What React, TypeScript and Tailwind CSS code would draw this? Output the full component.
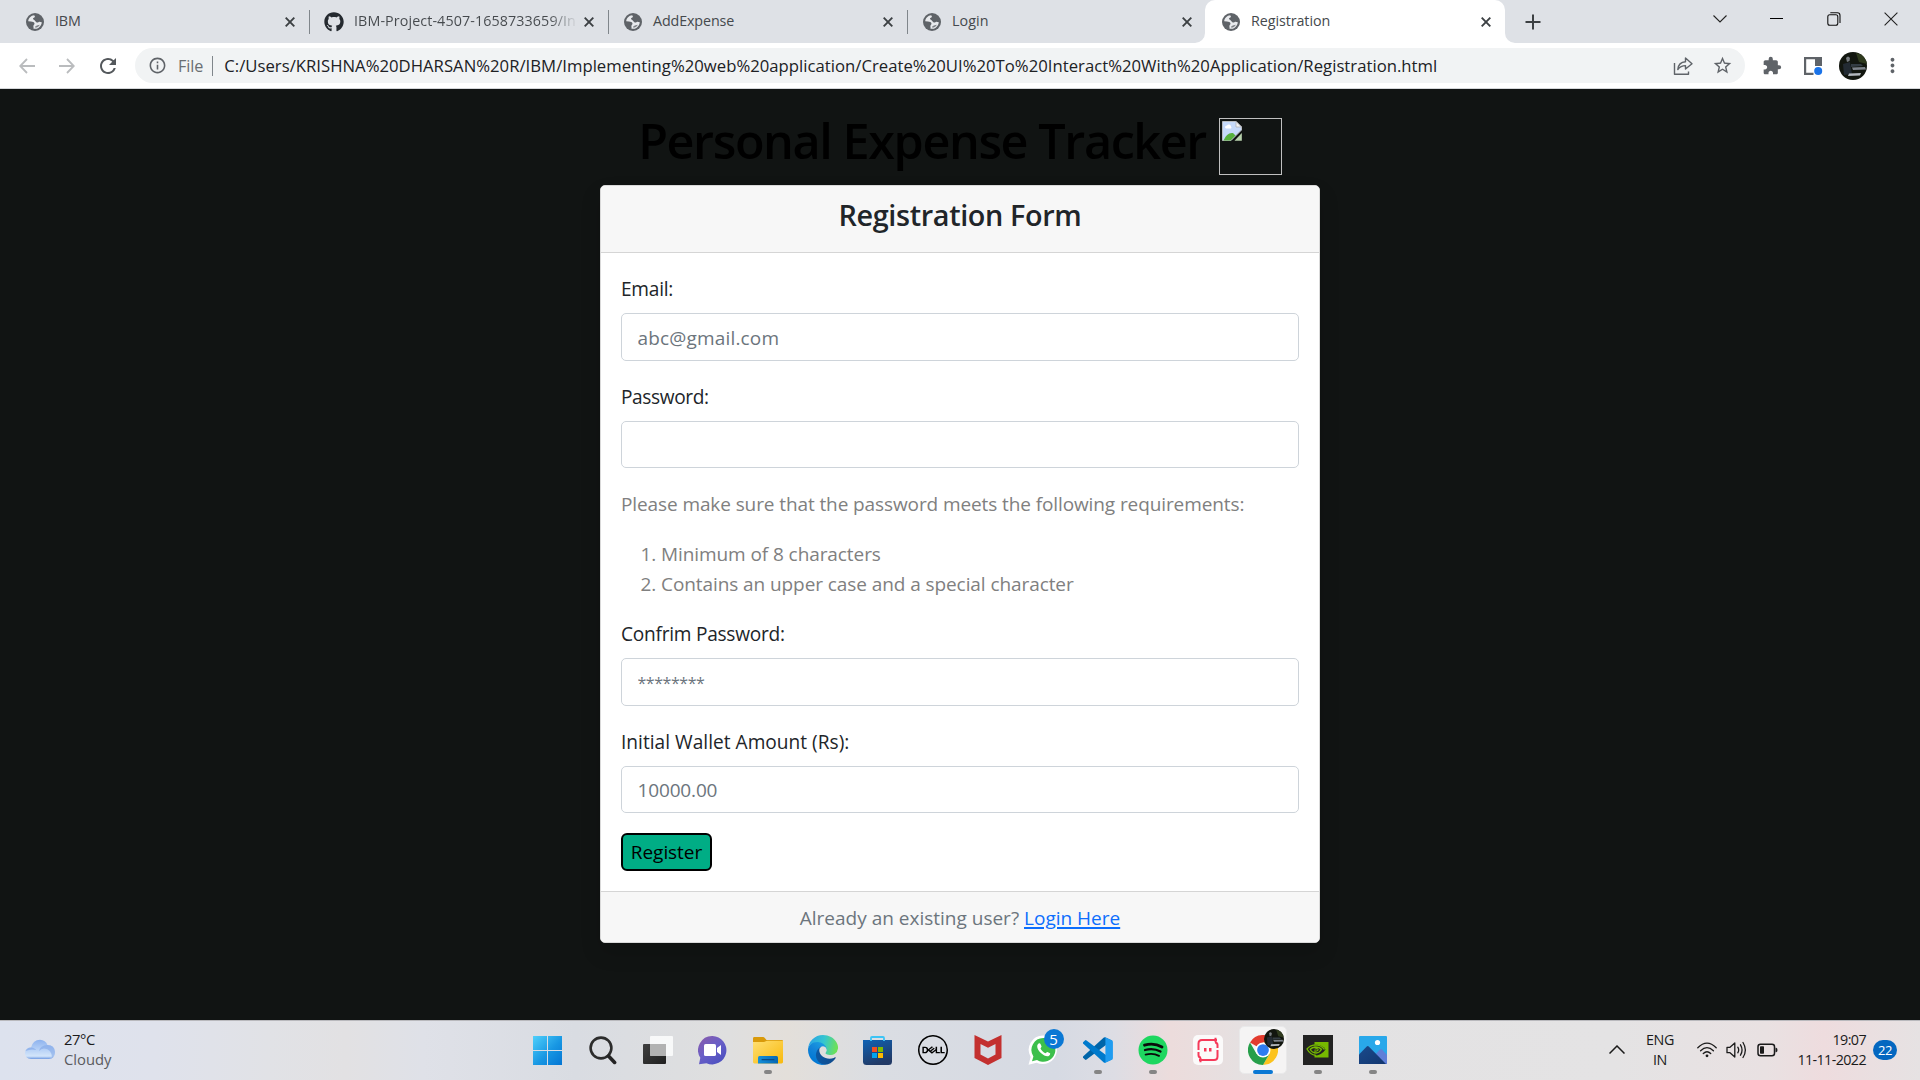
import type { ReactNode } from "react";
import { MdExtension, MdMoreVert, MdOutlineInfo, MdRefresh, MdStarBorder } from "react-icons/md";
import { FaGithub } from "react-icons/fa";
import { SiDell } from "react-icons/si";

/* ---------- Browser chrome ---------- */

function CloseGlyph({ className = "" }: { className?: string }) {
  return (
    <svg viewBox="0 0 10 10" className={`size-[10px] shrink-0 ${className}`} stroke="#3c4043" strokeWidth="1.9" fill="none">
      <path d="M0.7 0.7 9.3 9.3M9.3 0.7 0.7 9.3" />
    </svg>
  );
}

function GlobeIcon() {
  return (
    <svg viewBox="0 0 18 18" className="size-[18px]">
      <circle cx="9" cy="9" r="9" fill="#5f6368" />
      <path
        d="M8.200 2.200C5 2.500 2.500 4.900 2.200 8.200L5 8.400C6.500 8.500 8.300 9 8.500 10.400 8.600 11.500 7.500 11.800 7.400 13 7.300 14 7.800 14.600 7.500 15.700 9 16.100 11.200 15.800 12.700 14.700 14.500 13.400 15.700 11.500 15.800 9.300L13.300 8.700C12.500 8.500 12.400 9.600 11.500 9.600 10.300 9.600 9.500 8.300 8.800 7.500 8.200 6.800 6.900 6.700 7 5.600 7.100 4.700 8.800 4.700 9 3.700Z"
        fill="#e8eaed"
      />
      <path d="M10 7.200C11.200 7.500 12 6.700 12.800 7.300 12.300 8.500 11.300 8.600 10 7.200Z" fill="#5f6368" />
      <path d="M9.300 13.200C10.800 12.300 12.200 11.800 13.800 11.700 13 13.400 11 14.700 9.300 14.700Z" fill="#5f6368" fillOpacity="0.750" />
    </svg>
  );
}

function Tab({ icon, children, divider = true }: { icon: ReactNode; children: ReactNode; divider?: boolean }) {
  return (
    <div className="relative flex h-[43px] w-[299px] shrink-0 items-center pl-[15px] pr-[14px]">
      <div className="flex w-[20px] shrink-0 justify-center">{icon}</div>
      <div className="mb-[2px] ml-[10px] min-w-0 flex-1 whitespace-nowrap text-[14.3px] leading-[20px] text-[#45494d]">
        {children}
      </div>
      <CloseGlyph className="ml-[10px]" />
      {divider && <div className="absolute right-[-1px] top-[10px] h-[24px] w-px bg-[#80868b]" />}
    </div>
  );
}

function TabStrip() {
  return (
    <div className="flex h-[43px] bg-[#dee1e6] pl-[10px]">
      <Tab icon={<GlobeIcon />}>
        <span className="tracking-[-0.17px]">IBM</span>
      </Tab>
      <Tab icon={<FaGithub className="size-[20px] text-[#24292f]" />}>
        <span className="bg-[linear-gradient(to_right,#45494d_88%,#dee1e6_101%)] bg-clip-text tracking-[0.1px] text-transparent">
          IBM-Project-4507-1658733659/In
        </span>
      </Tab>
      <Tab icon={<GlobeIcon />}>
        <span className="tracking-[-0.12px]">AddExpense</span>
      </Tab>
      <Tab icon={<GlobeIcon />} divider={false}>
        <span className="tracking-[0.06px]">Login</span>
      </Tab>
      <div className="relative -ml-px w-[300px] shrink-0 rounded-t-[10px] bg-white pl-px">
        <Tab icon={<GlobeIcon />} divider={false}>
          <span className="tracking-[-0.07px]">Registration</span>
        </Tab>
        <svg className="absolute bottom-0 left-[-10px] size-[10px]" viewBox="0 0 10 10">
          <path d="M10 0V10H0A10 10 0 0 0 10 0Z" fill="#fff" />
        </svg>
        <svg className="absolute bottom-0 right-[-10px] size-[10px]" viewBox="0 0 10 10">
          <path d="M0 0V10H10A10 10 0 0 1 0 0Z" fill="#fff" />
        </svg>
      </div>
      <div className="flex w-[55px] items-center justify-center">
        <svg viewBox="0 0 16 16" className="size-[16px]" stroke="#3c4043" strokeWidth="2">
          <path d="M8 0.5V15.5M0.5 8H15.5" />
        </svg>
      </div>
      <div className="ml-auto flex h-[37px] items-center">
        <div className="flex w-[57px] justify-center">
          <svg viewBox="0 0 14 8" className="h-[8px] w-[14px]" fill="none" stroke="#222" strokeWidth="1.1">
            <path d="M0.5 0.5 7 7 13.5 0.5" />
          </svg>
        </div>
        <div className="flex w-[57px] justify-center">
          <div className="h-px w-[13px] bg-black" />
        </div>
        <div className="flex w-[57px] justify-center">
          <svg viewBox="0 0 14 14" className="size-[14px]" fill="none" stroke="#111" strokeWidth="1.1">
            <rect x="0.8" y="2.8" width="10" height="10.4" rx="2" />
            <path d="M3.3 0.8H10.4Q13 0.8 13 3.4V11" />
          </svg>
        </div>
        <div className="flex w-[58px] justify-center">
          <svg viewBox="0 0 14 14" className="size-[14px]" fill="none" stroke="#222" strokeWidth="1.1">
            <path d="M0.6 0.6 13.4 13.4M13.4 0.6 0.6 13.4" />
          </svg>
        </div>
      </div>
    </div>
  );
}

function Avatar({ className = "" }: { className?: string }) {
  return (
    <svg viewBox="0 0 28 28" className={className}>
      <defs>
        <clipPath id="avatarClip">
          <circle cx="14" cy="14" r="14" />
        </clipPath>
      </defs>
      <g clipPath="url(#avatarClip)">
        <rect width="28" height="28" fill="#12160f" />
        <path d="M17 1 28 4V12L20 10Z" fill="#2f3a1e" />
        <path d="M7 6Q9 3 11 6L10.500 9 8 10Z" fill="#777c80" />
        <path d="M4 12 11 10 13 22 5 23Z" fill="#232b33" />
        <path d="M13 15.500 26 15 27 17.500 14 18Z" fill="#7d838b" />
        <path d="M10 21.500 22 21 21 23.500 9 24Z" fill="#b3b8be" />
        <path d="M12 12 22 12 24 14 12 15Z" fill="#343d44" />
      </g>
    </svg>
  );
}

function ArrowGlyph({ flip = false }: { flip?: boolean }) {
  return (
    <svg viewBox="0 0 16 16" className={flip ? "size-[16px] rotate-180" : "size-[16px]"} fill="none" stroke="#babcbe" strokeWidth="1.8">
      <path d="M16 8H1.5M8 1 1.2 8 8 15" />
    </svg>
  );
}

function Toolbar() {
  return (
    <div className="flex h-[46px] items-center border-b border-[#d5d7da] bg-white">
      <div className="ml-[19px] flex w-[16px]">
        <ArrowGlyph />
      </div>
      <div className="ml-[24px] flex w-[16px]">
        <ArrowGlyph flip />
      </div>
      <MdRefresh className="ml-[21px] size-[24px] text-[#54585c]" />
      <div className="ml-[15px] flex h-[35px] w-[1610px] items-center rounded-full bg-[#f1f3f4] pl-[13px]">
        <MdOutlineInfo className="size-[19px] text-[#5f6368]" />
        <span className="ml-[11px] text-[16.2px] leading-[24px] tracking-[-0.1px] text-[#6a6e72]">File</span>
        <div className="ml-[9px] h-[20px] w-px bg-[#80868b]" />
        <span className="ml-[11px] whitespace-nowrap text-[16.7px] leading-[24px] tracking-[0.018px] text-[#202124]">
          C:/Users/KRISHNA%20DHARSAN%20R/IBM/Implementing%20web%20application/Create%20UI%20To%20Interact%20With%20Application/Registration.html
        </span>
        <div className="ml-auto flex items-center pr-[12px]">
          <svg viewBox="0 0 20 20" className="size-[20px]" fill="none" stroke="#5f6368" strokeWidth="1.4" strokeLinejoin="round">
            <path d="M1.5 7V18.3H15.5V15.5" />
            <path d="M4.8 13.5C5.3 8.5 8.3 6 12.5 5.8V2L19 7.7 12.5 13V9.6C9 9.6 6.8 10.7 4.8 13.5Z" />
          </svg>
          <MdStarBorder className="ml-[19px] size-[21px] text-[#5f6368]" />
        </div>
      </div>
      <MdExtension className="ml-[17px] size-[20px] text-[#5f6368]" />
      <svg viewBox="0 0 20 20" className="ml-[21px] size-[20px]">
        <path d="M1 1H19V10H12V3.2H3.2V16.8H10.5V19H1Z" fill="#5f6368" />
        <circle cx="15.2" cy="15" r="4" fill="#1a73e8" />
      </svg>
      <Avatar className="ml-[16px] size-[28px]" />
      <MdMoreVert className="ml-[14px] size-[23px] text-[#5f6368]" />
    </div>
  );
}

/* ---------- Registration page ---------- */

function BrokenImage() {
  return (
    <div className="ml-[13px] mt-[2px] h-[57px] w-[63px] border border-[#c0c0c0] pl-[2px] pt-[2px]">
      <svg viewBox="0 0 20 20" className="size-[20px]">
        <path d="M0.5 0.5H14L19.5 6V9L9 19.5H0.5Z" fill="#c6dafa" stroke="#b9bcc0" />
        <path d="M14 0.5 19.5 6H14Z" fill="#f4f4f4" stroke="#b0b3b8" strokeWidth="0.8" />
        <path d="M3 6.5A2 2 0 0 1 5 4.5 2.2 2.2 0 0 1 9 5.5 1.4 1.4 0 0 1 9 7.5H4Z" fill="#fff" />
        <path d="M1.5 19.5Q5 11 11 12L13.5 14.5 8.5 19.5Z" fill="#57b13e" />
        <path d="M19.8 12V19.8H12.5Z" fill="#b9d3ae" />
      </svg>
    </div>
  );
}

function Field({ label, placeholder, labelTracking, inputClass = "text-[19px]" }: { label: string; placeholder: string; labelTracking: string; inputClass?: string }) {
  return (
    <div className="mb-[20px]">
      <label className={`mb-[9px] block pt-[2px] text-[19.1px] leading-[29px] text-[#212529] ${labelTracking}`}>{label}</label>
      <input
        placeholder={placeholder}
        className={`block h-[47.5px] w-full rounded-[5px] border border-[#ced4da] bg-white px-[15.5px] pb-0 pt-[2px] placeholder:text-[#6c757d] ${inputClass}`}
      />
    </div>
  );
}

function RegistrationPage() {
  return (
    <main className="flex h-[931px] flex-col items-center bg-[#111413] pt-[27px]">
      <div className="flex h-[69px] items-start">
        <h1 className="-mt-[2px] text-[48.5px] font-semibold leading-[52px] tracking-[-1.39px] text-black">Personal Expense Tracker</h1>
        <BrokenImage />
      </div>
      <section className="w-[720px] overflow-hidden rounded-[5px] border border-[#d9d9d9] bg-white shadow-[0_10px_20px_rgba(0,0,0,0.15)]">
        <header className="h-[67px] border-b border-[#d5d5d5] bg-[#f7f7f7] pt-[11px] text-center">
          <h2 className="text-[28.8px] font-semibold leading-[36px] tracking-[-0.36px] text-[#212529]">Registration Form</h2>
        </header>
        <form className="px-[20px] pb-[20px] pt-[20px]">
          <Field label="Email:" placeholder="abc@gmail.com" labelTracking="tracking-[-0.25px]" inputClass="text-[19px] tracking-[0.17px]" />
          <Field label="Password:" placeholder="" labelTracking="tracking-[-0.38px]" />
          <div className="pt-px text-[19px] leading-[30px] text-[#808080]">
            <p className="mb-[20px] tracking-[-0.1px]">Please make sure that the password meets the following requirements:</p>
            <ol className="mb-[19px] list-decimal pl-[40px] tracking-[-0.08px]">
              <li>Minimum of 8 characters</li>
              <li>Contains an upper case and a special character</li>
            </ol>
          </div>
          <Field label="Confrim Password:" placeholder="********" labelTracking="tracking-[-0.25px]" inputClass="text-[16px] tracking-[-0.45px]" />
          <Field label="Initial Wallet Amount (Rs):" placeholder="10000.00" labelTracking="tracking-[0.02px]" inputClass="text-[19px] tracking-[-0.15px]" />
          <button
            type="button"
            className="block h-[38px] w-[91px] rounded-[6px] border-2 border-black bg-[#00ad85] pt-px text-center text-[19px] leading-[33px] tracking-[-0.06px] text-black"
          >
            Register
          </button>
        </form>
        <footer className="h-[51px] border-t border-[#d5d5d5] bg-[#f7f7f7] pt-[11px] text-center text-[19px] leading-[30px] text-[#6c757d]">
          Already an existing user? <a className="text-[#0d6efd] underline decoration-2 underline-offset-2">Login Here</a>
        </footer>
      </section>
    </main>
  );
}

/* ---------- Taskbar ---------- */

function WindowsIcon() {
  return (
    <svg viewBox="0 0 29 29" className="size-[29px]">
      <defs>
        <linearGradient id="win" x1="0" y1="0" x2="1" y2="1">
          <stop offset="0" stopColor="#4fd0fb" />
          <stop offset="0.55" stopColor="#1897e3" />
          <stop offset="1" stopColor="#0475d3" />
        </linearGradient>
      </defs>
      <path d="M0 0H14V14H0ZM15 0H29V14H15ZM0 15H14V29H0ZM15 15H29V29H15Z" fill="url(#win)" />
    </svg>
  );
}

function SearchIcon() {
  return (
    <svg viewBox="0 0 28 29" className="h-[29px] w-[28px]" fill="none">
      <circle cx="12" cy="12" r="10.4" stroke="#2c2c2c" strokeWidth="2.6" />
      <path d="M19.5 20 25.6 26.4" stroke="#242424" strokeWidth="3.6" strokeLinecap="round" />
    </svg>
  );
}

function TaskViewIcon() {
  return (
    <svg viewBox="0 0 30 29" className="h-[29px] w-[30px]">
      <defs>
        <linearGradient id="tv" x1="0" y1="0" x2="1" y2="1">
          <stop offset="0" stopColor="#3f3f3f" />
          <stop offset="1" stopColor="#202020" />
        </linearGradient>
      </defs>
      <rect y="8" width="23" height="20" rx="1" fill="url(#tv)" />
      <rect x="7" y="0" width="23" height="20" rx="1" fill="#fff" fillOpacity="0.8" />
      <path d="M7 8H23V20H8Q7 20 7 19Z" fill="#a9a9a9" fillOpacity="0.8" />
    </svg>
  );
}

function ChatIcon() {
  return (
    <svg viewBox="0 0 29 29" className="size-[29px]">
      <defs>
        <linearGradient id="chat" x1="0" y1="0" x2="0.8" y2="1">
          <stop offset="0" stopColor="#8b5aa8" />
          <stop offset="0.5" stopColor="#6a5fc7" />
          <stop offset="1" stopColor="#4a4fc0" />
        </linearGradient>
      </defs>
      <path d="M14.5 0A14.2 14.2 0 1 1 8.5 27.2L1 28.3 2.3 21.8A14.2 14.2 0 0 1 14.5 0Z" fill="url(#chat)" />
      <rect x="6" y="8" width="12" height="12" rx="1.6" fill="#fff" />
      <path d="M19 12 23 9V19L19 16Z" fill="#fff" />
    </svg>
  );
}

function FolderIcon() {
  return (
    <svg viewBox="0 0 30 29" className="h-[29px] w-[30px]">
      <defs>
        <linearGradient id="folder" x1="0" y1="0" x2="1" y2="1">
          <stop offset="0" stopColor="#ffdf72" />
          <stop offset="1" stopColor="#f8b90c" />
        </linearGradient>
        <linearGradient id="folderBase" x1="0" y1="0" x2="1" y2="0">
          <stop offset="0" stopColor="#1590d9" />
          <stop offset="1" stopColor="#0667b4" />
        </linearGradient>
      </defs>
      <path d="M0 2.4Q0 1 1.4 1H10Q11 1 12 2.2L13.5 4H29Q30 4 30 5V10H0Z" fill="#d99a0a" />
      <path d="M0 6H11L14 4.8H30V26Q30 27.4 28.6 27.4H1.4Q0 27.4 0 26Z" fill="url(#folder)" />
      <path d="M5 27.4V21.5Q5 20 6.5 20H23.5Q25 20 25 21.5V27.4Z" fill="url(#folderBase)" />
      <rect x="8.5" y="23" width="13" height="1.3" rx="0.6" fill="#0a4a85" />
    </svg>
  );
}

function EdgeIcon() {
  return (
    <svg viewBox="0 0 256 256" className="size-[30px]">
      <defs>
        <linearGradient id="edgeA" x1="63" y1="178" x2="241" y2="178" gradientUnits="userSpaceOnUse">
          <stop offset="0" stopColor="#0c59a4" />
          <stop offset="1" stopColor="#114a8b" />
        </linearGradient>
        <linearGradient id="edgeB" x1="140" y1="80" x2="40" y2="220" gradientUnits="userSpaceOnUse">
          <stop offset="0" stopColor="#1b9de2" />
          <stop offset="0.5" stopColor="#1383d8" />
          <stop offset="1" stopColor="#0078d4" />
        </linearGradient>
        <linearGradient id="edgeC" x1="20" y1="60" x2="240" y2="110" gradientUnits="userSpaceOnUse">
          <stop offset="0" stopColor="#2ba7e3" />
          <stop offset="0.5" stopColor="#36c6d0" />
          <stop offset="1" stopColor="#6be05a" />
        </linearGradient>
      </defs>
      <path d="M231 190.5a94 94 0 0 1-10.500 4.700 101.900 101.900 0 0 1-35.900 6.400c-47.300 0-88.500-32.500-88.500-74.300a31.500 31.500 0 0 1 16.400-27.300c-42.800 1.800-53.800 46.400-53.800 72.500 0 73.900 68.100 81.400 82.800 81.400 7.900 0 19.800-2.300 27-4.600l1.300-.4a128.300 128.300 0 0 0 66.600-52.800 4 4 0 0 0-5.400-5.600Z" fill="url(#edgeA)" />
      <path d="M105.700 241.400A79.200 79.200 0 0 1 83 220.100a80.700 80.700 0 0 1 29.500-120c3.200-1.500 8.500-4.200 15.600-4.100a32.400 32.400 0 0 1 25.700 13 31.900 31.900 0 0 1 6.300 18.700c0-.2 24.500-79.600-80-79.600-43.900 0-80 41.700-80 78.200a130.200 130.200 0 0 0 12.100 56 128 128 0 0 0 156.400 67 75.500 75.500 0 0 1-62.800-7.900Z" fill="url(#edgeB)" />
      <path d="M152.300 148.900c-.8 1-3.300 2.500-3.300 5.700 0 2.600 1.700 5.200 4.800 7.300 14.400 10.100 41.700 8.700 41.800 8.700a59.600 59.600 0 0 0 30.300-8.300 61.400 61.400 0 0 0 30.400-52.900c.3-22.400-8-37.300-11.300-43.900C223.700 23.900 177.700 0 127.600 0A128 128 0 0 0 0 126.200c.5-36.500 36.800-66 80-66 3.500 0 23.500.3 42 10 16.300 8.600 24.900 18.900 30.800 29.200 6.200 10.700 7.300 24.100 7.300 29.500 0 5.300-2.700 13.300-7.800 20Z" fill="url(#edgeC)" />
    </svg>
  );
}

function StoreIcon() {
  return (
    <svg viewBox="0 0 29 30" className="h-[30px] w-[29px]">
      <defs>
        <linearGradient id="store" x1="0" y1="0" x2="0.4" y2="1">
          <stop offset="0" stopColor="#0f62b5" />
          <stop offset="1" stopColor="#213a66" />
        </linearGradient>
      </defs>
      <path d="M0 5H29V26.500Q29 30 25.500 30H3.500Q0 30 0 26.500Z" fill="url(#store)" />
      <path d="M8 6V3Q8 2 9 2H20Q21 2 21 3V6" fill="none" stroke="#3cc4f5" strokeWidth="1.8" />
      <path d="M9 12H14V17H9Z" fill="#f25022" />
      <path d="M15 12H20V17H15Z" fill="#7fba00" />
      <path d="M9 18H14V23H9Z" fill="#00a4ef" />
      <path d="M15 18H20V23H15Z" fill="#ffb900" />
    </svg>
  );
}

function McAfeeIcon() {
  return (
    <svg viewBox="0 0 28 30" className="h-[30px] w-[28px]">
      <path
        d="M0.500 0 14 6.500 27.500 0V23L14 30 0.500 23ZM6.500 9V19.500L14 23.500 21.500 19.500V9L14 12.700Z"
        fill="#c3302f"
        fillRule="evenodd"
      />
    </svg>
  );
}

function WhatsAppIcon() {
  return (
    <div className="relative size-[30px]">
      <svg viewBox="0 0 30 30" className="size-[30px]">
        <path d="M15.500 0.500A14.300 14.300 0 1 1 8.500 27.700L0.500 29.800 2.700 22A14.300 14.300 0 0 1 15.500 0.500Z" fill="#fff" />
        <path d="M15.500 3A11.900 11.900 0 1 1 9 24.900L4 26.300 5.400 21.400A11.900 11.900 0 0 1 15.500 3Z" fill="#3cbf4b" />
        <path
          d="M10.600 8.600C11.300 8 12.100 8.200 12.500 9L13.500 11.300C13.700 12 12.600 13 12.500 13.500 13.500 15.700 15.300 17.300 17.500 18.200 18 18.200 18.900 16.800 19.500 17L22 18.300C22.600 18.800 21.800 20.800 20.300 21.200 17 22.200 9 16.500 9.200 11.300 9.300 10 10 9 10.600 8.600Z"
          fill="#fff"
        />
      </svg>
      <div className="absolute left-[16px] top-[-6px] flex size-[20px] items-center justify-center rounded-full bg-[#0a78d4] text-[15px] leading-[20px] text-white">
        5
      </div>
    </div>
  );
}

function VSCodeIcon() {
  return (
    <svg viewBox="0 0 256 256" className="size-[30px]">
      <path d="m246.100 45.900-52.700-25.400a15.900 15.900 0 0 0-18.200 3.100L2.700 180.900a10.700 10.700 0 0 0 0 15.700l14.100 12.900a10.700 10.700 0 0 0 13.600.6L238.100 52.400a10.600 10.600 0 0 1 17 8.500v-.6a16 16 0 0 0-9-14.400Z" fill="#0065a9" />
      <path d="m246.100 210.100-52.700 25.400a16 16 0 0 1-18.200-3.100L2.700 75.100a10.700 10.700 0 0 1 0-15.700l14.100-12.900a10.700 10.700 0 0 1 13.600-.6l207.700 157.700a10.600 10.600 0 0 0 17-8.500v.6a16 16 0 0 1-9 14.400Z" fill="#007acc" />
      <path d="M193.400 235.500a16 16 0 0 1-18.200-3.100 9.400 9.400 0 0 0 16-6.600V30.200a9.400 9.400 0 0 0-16-6.600 16 16 0 0 1 18.200-3.100l52.700 25.300a16 16 0 0 1 9.100 14.400v135.600a16 16 0 0 1-9.100 14.400Z" fill="#1f9cf0" />
    </svg>
  );
}

function SpotifyIcon() {
  return (
    <svg viewBox="0 0 30 30" className="size-[30px]" fill="none" stroke="#0a0a0a" strokeLinecap="round">
      <circle cx="15" cy="15" r="14.500" fill="#1ed760" stroke="none" />
      <path d="M6.500 10.200Q16 7.500 24 12" strokeWidth="2.800" />
      <path d="M7 15Q15.500 12.700 22.500 16.500" strokeWidth="2.300" />
      <path d="M7.600 19.600Q15 17.600 21 20.800" strokeWidth="1.900" />
    </svg>
  );
}

function FrameIcon() {
  return (
    <svg viewBox="0 0 30 30" className="size-[30px]">
      <rect width="30" height="30" rx="5" fill="#fbfafa" />
      <g fill="none" stroke="#f63a5a" strokeWidth="2">
        <path d="M5.500 15V8.500Q5.500 5 9 5H24M22.500 2.800V7.200" />
        <path d="M24.500 15V21.500Q24.500 25 21 25H6M7.500 22.800V27.200" />
        <path d="M24.500 13V10Q24.500 7.500 22 7.500M5.500 17V20Q5.500 22.500 8 22.500" />
      </g>
      <path d="M11 13H13.500V16.500H11ZM16 13H18.500V16.500H16Z" fill="#f63a5a" />
    </svg>
  );
}

function ChromeIcon() {
  return (
    <div className="relative size-[30px]">
      <svg viewBox="0 0 48 48" className="size-[30px]">
        <path d="M24 24 3.200 12A24 24 0 0 1 44.800 12H24Z" fill="#e33b2e" />
        <path d="M24 12H44.800A24 24 0 0 1 24 48L34.400 30Z" fill="#fcc31e" />
        <path d="M3.200 12A24 24 0 0 0 24 48L34.400 30 24 24 13.600 30Z" fill="#269f4a" />
        <circle cx="24" cy="24" r="12" fill="#fff" />
        <circle cx="24" cy="24" r="9.400" fill="#2f7cf0" />
      </svg>
      <Avatar className="absolute left-[16px] top-[-6px] size-[20px]" />
    </div>
  );
}

function NvidiaIcon() {
  return (
    <svg viewBox="0 0 30 30" className="size-[30px]">
      <rect width="30" height="30" fill="#222" />
      <path d="M11.500 7H25.500V22.500H11.500Z" fill="#76b900" />
      <path d="M11.500 9.500Q19 9.500 22.500 14.500 18.500 20.500 11.500 20.500Z" fill="#222" />
      <g fill="none" stroke="#76b900" strokeWidth="1.300">
        <path d="M21.500 14.500Q18 9.800 12 9.800 7 10.200 4 14 7 19.500 13 20.500" />
        <path d="M18.500 14.500Q16.500 12 12.500 12 9 12.300 7.200 14.300 9 18 13 18 16.500 17.800 18.500 14.500Z" />
        <path d="M12 14Q15.500 13 15 15 14 16.500 11.500 16" />
      </g>
    </svg>
  );
}

function PhotosIcon() {
  return (
    <svg viewBox="0 0 28 28" className="size-[28px]">
      <defs>
        <linearGradient id="mount" x1="0" y1="0" x2="1" y2="1">
          <stop offset="0" stopColor="#1a4a8c" />
          <stop offset="1" stopColor="#12366f" />
        </linearGradient>
      </defs>
      <rect width="28" height="28" rx="1" fill="#29a8ea" />
      <path d="M15 20 21 13.500Q22 12.500 23 13.500L28 19V28H20Z" fill="#5f7fd8" />
      <path d="M0 18.500 7.500 10.700Q8.700 9.500 10 10.700L27 28H0Z" fill="url(#mount)" />
      <circle cx="18.500" cy="6.500" r="2.600" fill="#fff" />
    </svg>
  );
}

const apps: { name: string; icon: ReactNode; state?: "running" | "active" }[] = [
  { name: "start", icon: <WindowsIcon /> },
  { name: "search", icon: <SearchIcon /> },
  { name: "taskview", icon: <TaskViewIcon /> },
  { name: "chat", icon: <ChatIcon /> },
  { name: "explorer", icon: <FolderIcon />, state: "running" },
  { name: "edge", icon: <EdgeIcon /> },
  { name: "store", icon: <StoreIcon /> },
  { name: "dell", icon: <SiDell className="size-[30px] text-black" /> },
  { name: "mcafee", icon: <McAfeeIcon /> },
  { name: "whatsapp", icon: <WhatsAppIcon /> },
  { name: "vscode", icon: <VSCodeIcon />, state: "running" },
  { name: "spotify", icon: <SpotifyIcon />, state: "running" },
  { name: "frame", icon: <FrameIcon /> },
  { name: "chrome", icon: <ChromeIcon />, state: "active" },
  { name: "nvidia", icon: <NvidiaIcon />, state: "running" },
  { name: "photos", icon: <PhotosIcon />, state: "running" },
];

function Taskbar() {
  return (
    <div className="grid h-[60px] grid-cols-[520px_880px_520px] border-t border-[#b9b9bd] bg-[linear-gradient(to_right,#dde2ee_0%,#dfe2ec_8%,#e1e2e6_14%,#e2e1e3_18%,#dfe1e8_22%,#d9dce2_30%,#dfdfdf_38%,#e3dfda_41%,#dadde3_46%,#d6dae3_55%,#dddde4_58%,#ecdcdc_61%,#e3e2e3_66%,#e4e3e4_84%,#e9e1e2_92%,#eedcde_95%,#e6e2e3_100%)]">
      <div className="flex items-center pb-[3px] pl-[24px]">
        <svg viewBox="0 0 32 20" className="h-[20px] w-[32px]">
          <defs>
            <linearGradient id="cloud" x1="0" y1="0" x2="0" y2="1">
              <stop offset="0" stopColor="#8db2ee" />
              <stop offset="0.500" stopColor="#b5d0f6" />
              <stop offset="0.850" stopColor="#d3e5fa" />
              <stop offset="1" stopColor="#709be2" />
            </linearGradient>
          </defs>
          <path d="M7 20Q1 19.500 1 14 1.500 8.500 7 8.500 9 1 16 0.800 21.500 1 23.500 6 30.500 6.200 31 13 31 19.500 25 20Z" fill="url(#cloud)" />
          <path d="M15 12Q16 6.500 23.500 6 30.500 6.200 31 13 31 17 28 19 28 10 20 9.500 17 9.600 15 12Z" fill="#7da4e6" opacity="0.550" />
          <path d="M1.500 12Q3 8.500 7 8.500 11 9 12 11 7 9.500 1.500 12Z" fill="#7da4e6" opacity="0.600" />
        </svg>
        <div className="mb-px ml-[8px] text-[14.800px] leading-[20px]">
          <div className="tracking-[-0.400px] text-[#1b1b1b]">27°C</div>
          <div className="text-[#5a5b5f]">Cloudy</div>
        </div>
      </div>
      <div className="flex">
        {apps.map((app) => (
          <div key={app.name} className="relative flex h-[59px] w-[55px] items-center justify-center pb-px">
            {app.state === "active" && (
              <div className="absolute left-[3.500px] top-[5px] size-[48px] rounded-[5px] border border-[#e9e9ea] bg-[#f5f4f4]" />
            )}
            <div className="relative">{app.icon}</div>
            {app.state === "active" && (
              <div className="absolute left-[17.500px] top-[49px] h-[4px] w-[20px] rounded-full bg-[#0a78d4]" />
            )}
            {app.state === "running" && (
              <div className="absolute left-[23.500px] top-[49px] h-[4px] w-[8px] rounded-full bg-[#858585]" />
            )}
          </div>
        ))}
      </div>
      <div className="flex items-center justify-end pb-[2px] pr-[23px] text-[14.300px] leading-[20px] text-[#1b1b1b]">
        <svg viewBox="0 0 16 9" className="h-[9px] w-[16px]" fill="none" stroke="#1b1b1b" strokeWidth="1.500">
          <path d="M0.500 8.500 8 1 15.500 8.500" />
        </svg>
        <div className="ml-[20px] w-[30px] text-center tracking-[-0.300px]">
          <div>ENG</div>
          <div>IN</div>
        </div>
        <svg viewBox="0 0 20 16" className="ml-[22px] h-[16px] w-[20px]" fill="none" stroke="#1b1b1b" strokeWidth="1.300" strokeLinecap="round">
          <path d="M0.800 5.800Q10 -3.500 19.200 5.800M3.600 8.800Q10 2.500 16.400 8.800M6.300 11.500Q10 8 13.700 11.500" />
          <circle cx="10" cy="13.800" r="1.400" fill="#1b1b1b" stroke="none" />
        </svg>
        <svg viewBox="0 0 21 18" className="ml-[9px] h-[18px] w-[21px]" fill="none" stroke="#1b1b1b" strokeWidth="1.300" strokeLinecap="round" strokeLinejoin="round">
          <path d="M1 6.300H4L8.800 2V16L4 11.700H1Z" />
          <path d="M11.800 6.200Q13.600 9 11.800 11.800M14.500 3.800Q17.600 9 14.500 14.200M17 1.500Q21.700 9 17 16.500" />
        </svg>
        <svg viewBox="0 0 21 14" className="ml-[10px] h-[14px] w-[21px]">
          <rect x="1" y="1.200" width="16.500" height="11.600" rx="2.500" fill="none" stroke="#1b1b1b" strokeWidth="1.500" />
          <rect x="3" y="3.300" width="4" height="7.400" rx="0.800" fill="#1b1b1b" />
          <path d="M18.500 4.700H19.200Q20.500 5 20.500 7 20.500 9 19.200 9.300H18.500Z" fill="#1b1b1b" />
        </svg>
        <div className="ml-[18px] w-[70px] text-right tracking-[-0.600px]">
          <div>19:07</div>
          <div>11-11-2022</div>
        </div>
        <div className="ml-[7px] flex h-[20px] w-[24px] items-center justify-center rounded-full bg-[#0467c0] text-[13px] leading-[20px] tracking-[-0.400px] text-white">
          22
        </div>
      </div>
    </div>
  );
}

export default function App() {
  return (
    <div className="flex h-[1080px] w-[1920px] flex-col overflow-hidden bg-[#111413] font-['Open_Sans',sans-serif]">
      <TabStrip />
      <Toolbar />
      <RegistrationPage />
      <Taskbar />
    </div>
  );
}
